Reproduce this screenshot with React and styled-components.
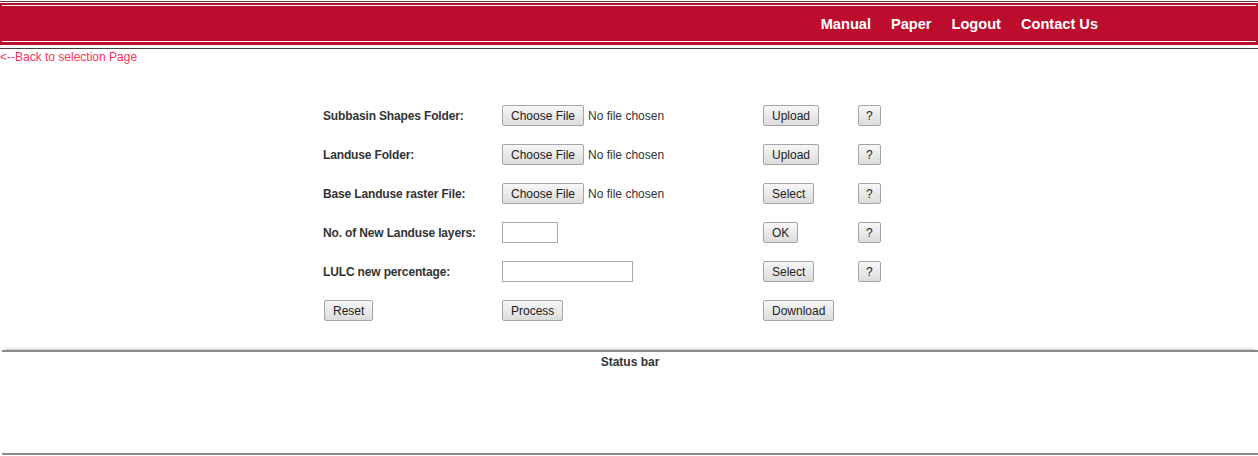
import React from "react";
import styled, { createGlobalStyle } from "styled-components";

const GlobalStyle = createGlobalStyle`
  html, body {
    margin: 0;
    padding: 0;
    background: #fff;
    font-family: "Liberation Sans", Arial, sans-serif;
  }
`;

const Page = styled.div`
  width: 1258px;
  height: 456px;
  overflow: hidden;
  background: #fff;
`;

const HeaderFrame = styled.div`
  margin-top: 1px;
  border-top: 1px solid #4a3f3f;
  border-bottom: 1px solid #4a3f3f;
  padding: 1px 0 3px;
`;

const HeaderBand = styled.div`
  background: #bc0d2e;
  padding: 2px 2px 3px;
`;

const HeaderInner = styled.div`
  border-top: 1px solid #fff;
  border-bottom: 1px solid #fff;
  height: 35px;
  display: flex;
  justify-content: flex-end;
  align-items: center;
  padding-right: 158px;
  gap: 20px;
`;

const NavLink = styled.a`
  color: #fff;
  font-weight: bold;
  font-size: 14.6px;
  text-decoration: none;
  cursor: pointer;
`;

const BackLink = styled.a`
  display: block;
  color: #f2355b;
  font-size: 12px;
  line-height: 14px;
  margin-top: 1px;
  text-decoration: none;
  cursor: pointer;
`;

const FormGrid = styled.div`
  width: 612px;
  margin: 32px auto 0;
  display: grid;
  grid-template-columns: 179px 261px 95px 77px;
  grid-auto-rows: 39px;
  align-items: center;
`;

const Label = styled.div`
  font-size: 12px;
  font-weight: bold;
  color: #333;
  letter-spacing: -0.15px;
`;

const Cell = styled.div`
  display: flex;
  align-items: center;
  padding-left: ${(p) => p.$indent || 0}px;
`;

const Button = styled.button`
  font-family: "Liberation Sans", Arial, sans-serif;
  font-size: 12px;
  color: #222;
  height: 21px;
  padding: 0 ${(p) => p.$pad || 8}px;
  border: 1px solid #a5a5a5;
  border-radius: 2px;
  background: linear-gradient(#f7f7f7, #dcdcdc);
  cursor: pointer;
`;

const FileName = styled.span`
  font-size: 12px;
  color: #333;
  margin-left: 4px;
`;

const TextInput = styled.input`
  box-sizing: border-box;
  width: ${(p) => p.$w}px;
  height: 21px;
  border: 1px solid #a9a9a9;
  padding: 0 3px;
  font-size: 12px;
`;

const StatusPanel = styled.div`
  margin-top: 20px;
  margin-left: 2px;
  height: 101px;
  border-top: 2px solid #8a8a8a;
  border-bottom: 2px solid #8a8a8a;
  box-shadow: 0 -3px 3px -3px rgba(0, 0, 0, 0.45);
  text-align: center;
`;

const StatusTitle = styled.div`
  font-size: 12px;
  font-weight: bold;
  color: #333;
  margin-top: 3px;
`;

const FileField = () => (
  <Cell>
    <Button $pad={8}>Choose File</Button>
    <FileName>No file chosen</FileName>
  </Cell>
);

const Help = () => (
  <Cell>
    <Button $pad={7}>?</Button>
  </Cell>
);

export default function App() {
  return (
    <Page>
      <GlobalStyle />
      <HeaderFrame>
        <HeaderBand>
          <HeaderInner>
            <NavLink>Manual</NavLink>
            <NavLink>Paper</NavLink>
            <NavLink>Logout</NavLink>
            <NavLink>Contact Us</NavLink>
          </HeaderInner>
        </HeaderBand>
      </HeaderFrame>
      <BackLink>&lt;--Back to selection Page</BackLink>

      <FormGrid>
        <Label>Subbasin Shapes Folder:</Label>
        <FileField />
        <Cell><Button>Upload</Button></Cell>
        <Help />

        <Label>Landuse Folder:</Label>
        <FileField />
        <Cell><Button>Upload</Button></Cell>
        <Help />

        <Label>Base Landuse raster File:</Label>
        <FileField />
        <Cell><Button>Select</Button></Cell>
        <Help />

        <Label>No. of New Landuse layers:</Label>
        <Cell><TextInput $w={56} /></Cell>
        <Cell><Button>OK</Button></Cell>
        <Help />

        <Label>LULC new percentage:</Label>
        <Cell><TextInput $w={131} /></Cell>
        <Cell><Button>Select</Button></Cell>
        <Help />

        <Cell $indent={1}><Button>Reset</Button></Cell>
        <Cell><Button>Process</Button></Cell>
        <Cell><Button>Download</Button></Cell>
        <div />
      </FormGrid>

      <StatusPanel>
        <StatusTitle>Status bar</StatusTitle>
      </StatusPanel>
    </Page>
  );
}
